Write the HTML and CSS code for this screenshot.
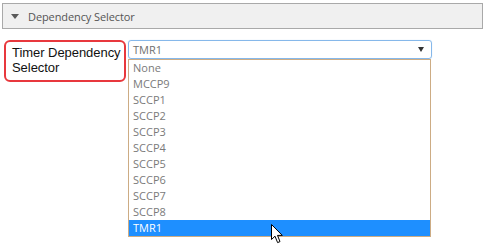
FILE: index.html
```html
<!DOCTYPE html>
<html>
<head>
<meta charset="utf-8">
<link rel="stylesheet" href="styles.css">
</head>
<body>
<div class="panel">
  <div class="header">
    <span class="caret"></span>
    <span class="title">Dependency Selector</span>
  </div>
  <div class="row">
    <div class="label">Timer Dependency<br>Selector</div>
    <div class="combo">
      <div class="select">
        <span class="value">TMR1</span>
        <span class="arrow"></span>
      </div>
      <ul class="list">
        <li>None</li>
        <li>MCCP9</li>
        <li>SCCP1</li>
        <li>SCCP2</li>
        <li>SCCP3</li>
        <li>SCCP4</li>
        <li>SCCP5</li>
        <li>SCCP6</li>
        <li>SCCP7</li>
        <li>SCCP8</li>
        <li class="active">TMR1</li>
      </ul>
      <svg class="cursor" width="13" height="20" viewBox="0 0 13 20">
        <path d="M0.5 0.5 L0.5 15.5 L4 12.2 L6.6 18.6 L9 17.6 L6.5 11.4 L11.3 11.4 Z" fill="#fff" stroke="#000" stroke-width="1" stroke-linejoin="round"/>
      </svg>
    </div>
  </div>
</div>
</body>
</html>
```
FILE: styles.css
```css
* { box-sizing: border-box; }
html, body { margin: 0; padding: 0; background: #fff; }
body { width: 496px; height: 248px; overflow: hidden; font-family: "Open Sans", "Noto Sans", sans-serif; }

.panel { padding: 3px 14px 0 2px; }

.header {
  height: 26px;
  width: 481px;
  background: #f0f0f0;
  border: 1px solid #a9a9a9;
  display: flex;
  align-items: center;
  padding-left: 8px;
}
.caret {
  width: 0; height: 0;
  border-left: 4px solid transparent;
  border-right: 4px solid transparent;
  border-top: 5px solid #5a5a5a;
  margin-right: 9px;
  margin-top: 1px;
}
.title { font-size: 11px; color: #555; letter-spacing: -0.1px; }

.row {
  display: flex;
  margin-top: 11px;
  margin-left: 2px;
  gap: 2px;
}
.label {
  width: 122px;
  height: 42px;
  border: 2.5px solid #e8383d;
  border-radius: 6px;
  font-family: "Liberation Sans", Arial, sans-serif;
  font-size: 13px;
  line-height: 15px;
  color: #111;
  white-space: nowrap;
  letter-spacing: -0.05px;
  padding: 3px 0 0 6px;
}

.combo { position: relative; width: 304px; }
.select {
  height: 19px;
  border: 1px solid #86b8ea;
  border-radius: 3px;
  box-shadow: 0 0 1px #b8d6f5;
  display: flex;
  align-items: center;
  justify-content: space-between;
  padding: 0 7px 0 4px;
}
.value { font-size: 11px; color: #707070; }
.arrow {
  width: 0; height: 0;
  border-left: 3px solid transparent;
  border-right: 3px solid transparent;
  border-top: 5px solid #333;
}
.list {
  list-style: none;
  margin: 0;
  padding: 0;
  width: 303px;
  border: 1px solid #cdac84;
}
.list li {
  height: 16px;
  line-height: 16px;
  font-size: 11px;
  color: #7a7a7a;
  padding-left: 4px;
}
.list li.active { background: #1e8fff; color: #fff; }

.cursor { position: absolute; left: 143px; top: 184px; }
```
